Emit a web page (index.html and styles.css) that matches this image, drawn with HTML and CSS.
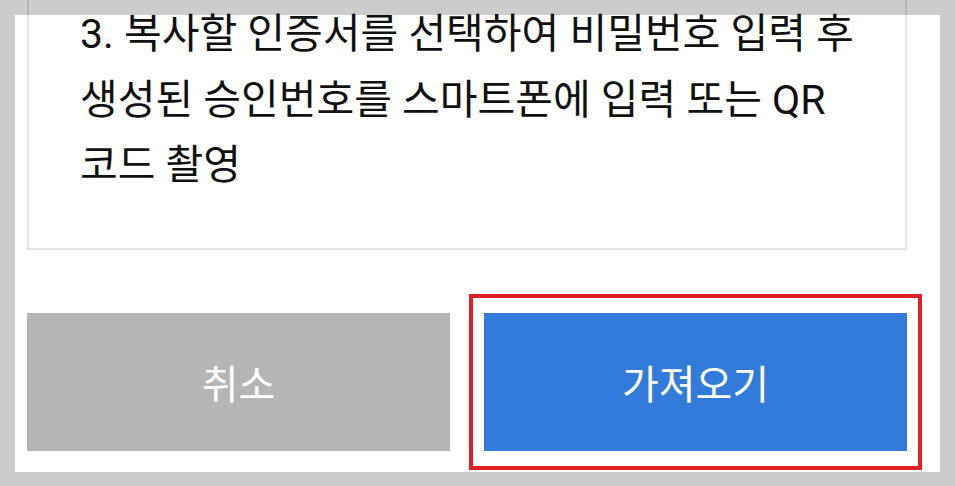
FILE: index.html
```html
<!DOCTYPE html>
<html lang="ko">
<head>
    <meta charset="UTF-8">
    <meta name="viewport" content="width=device-width, initial-scale=1.0">
    <title>인증서 가져오기</title>
    <link rel="stylesheet" href="styles.css">
</head>
<body>
    <div class="dialog">
        <div class="guide">
            <p>3. 복사할 인증서를 선택하여 비밀번호 입력 후 생성된 승인번호를 스마트폰에 입력 또는 QR 코드 촬영</p>
        </div>

        <div class="actions">
            <button class="btn btn-cancel">취소</button>
            <button class="btn btn-import">가져오기</button>
        </div>
    </div>

    <!-- dim strip over the top of the scrolled dialog -->
    <div class="top-dim"></div>
</body>
</html>
```

FILE: styles.css
```css
body {
    font-family: 'Roboto', 'Noto Sans CJK KR', sans-serif;
    background-color: #cccccc;
    margin: 0;
    padding: 0;
    height: 486px;
    overflow: hidden;
}
.dialog {
    background-color: #ffffff;
    width: 925px;
    margin: -13px 0 0 15px;
    padding: 0 33px 21px 12px;
    box-sizing: border-box;
}
.guide {
    border: 2px solid #e4e4e4;
    padding: 13px 26px 49px 51px;
}
.guide p {
    margin: 0;
    font-size: 41px;
    line-height: 65.5px;
    color: #111111;
    word-break: keep-all;
}
.actions {
    display: flex;
    gap: 34px;
    margin-top: 63px;
}
.btn {
    flex: 1;
    height: 138px;
    border: none;
    border-radius: 0;
    font-family: 'Roboto', 'Noto Sans CJK KR', sans-serif;
    font-size: 40px;
    color: #ffffff;
    padding: 0;
}
.btn-cancel {
    background-color: #b5b5b5;
}
.btn-import {
    background-color: #327bdb;
    position: relative;
}
.btn-import::after {
    content: "";
    position: absolute;
    top: -19px;
    bottom: -19px;
    left: -15px;
    right: -15px;
    border: 4px solid #e31e26;
}
.top-dim {
    position: fixed;
    top: 0;
    left: 15px;
    width: 925px;
    height: 15px;
    background-color: rgba(0, 0, 0, 0.2);
}
```
